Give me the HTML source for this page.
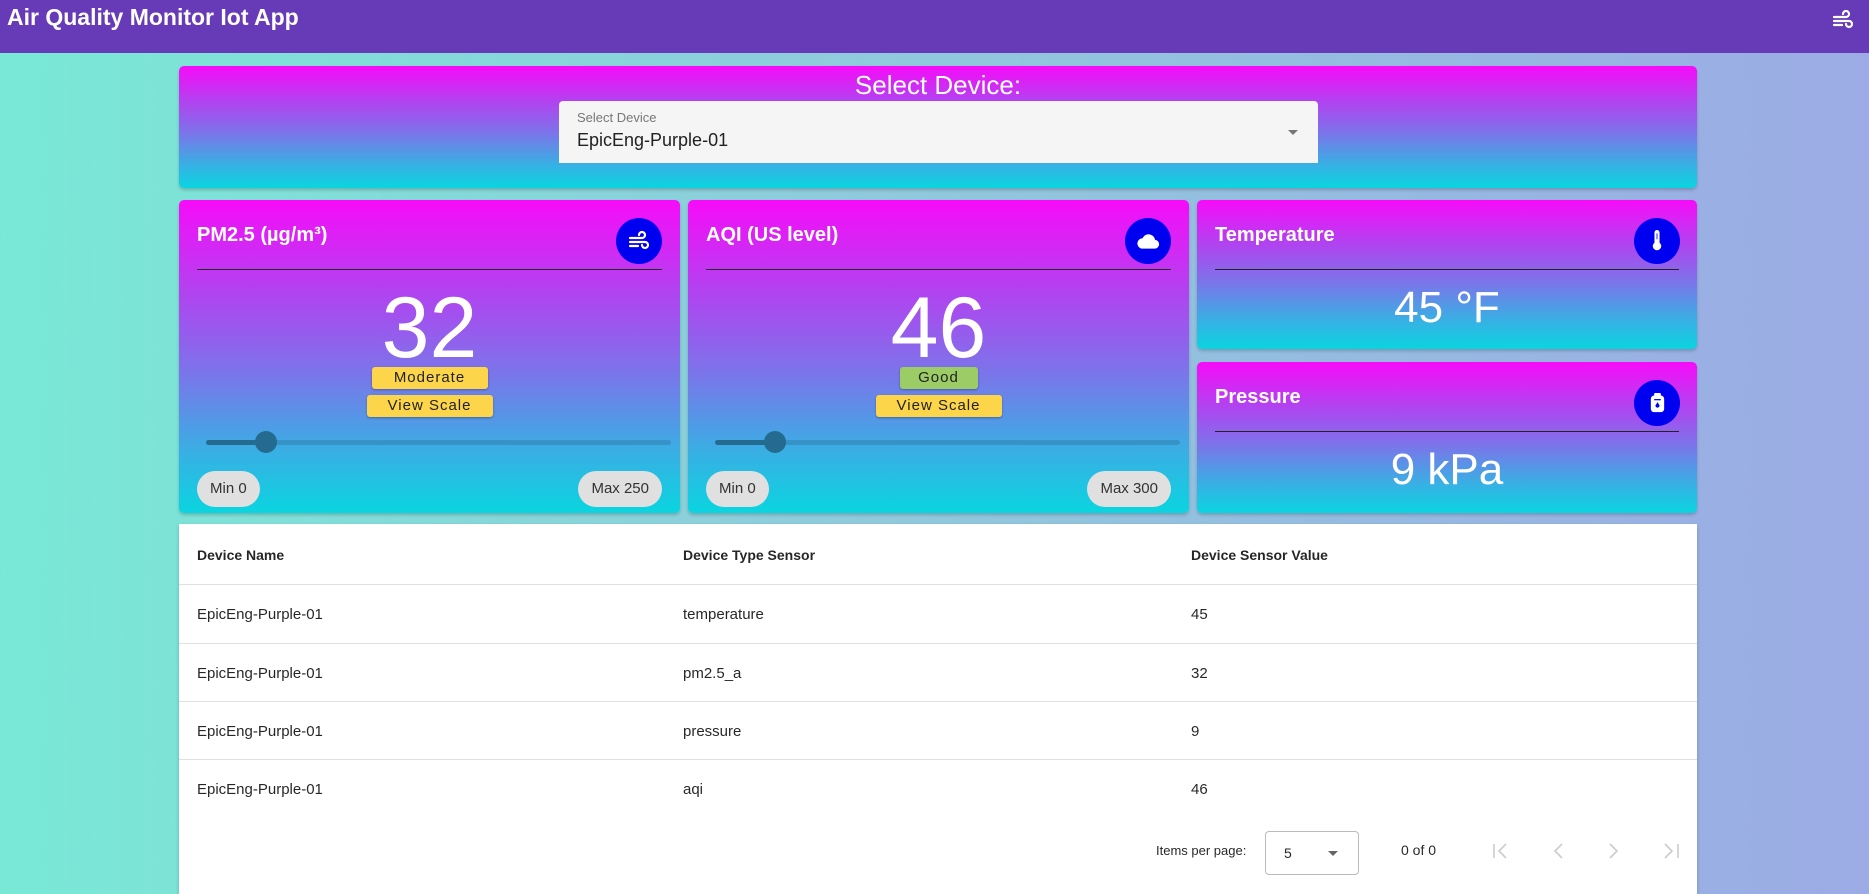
<!DOCTYPE html>
<html><head><meta charset="utf-8"><style>
*{box-sizing:border-box;margin:0;padding:0}
body{width:1869px;height:882px;overflow:hidden;font-family:"Liberation Sans",sans-serif;background:linear-gradient(90deg,#79e9d6 0%,#8fcbdc 45%,#9cabe5 100%);position:relative}
.bar{position:absolute;left:0;top:0;width:1869px;height:53px;background:#673ab7;color:#fff}
.bar .t{position:absolute;left:7px;top:4px;font-size:23px;font-weight:bold}
.card{position:absolute;border-radius:5px;background:linear-gradient(180deg,#f70bf9 0%,#b044f0 30%,#7c74ea 55%,#3aaee4 80%,#0ad5e0 100%);box-shadow:0 2px 3px rgba(0,0,0,.2);color:#fff}
.title{position:absolute;left:18px;top:24px;font-size:20px;font-weight:bold}
.ic{position:absolute;width:46px;height:46px;border-radius:50%;background:#0000f0;display:flex;align-items:center;justify-content:center}
.div{position:absolute;left:18px;right:18px;height:1px;background:#222}
.big{position:absolute;left:0;right:0;text-align:center;line-height:1}
.chip{position:absolute;left:50%;transform:translateX(-50%);background:#fcd54a;color:#222;font-size:15px;text-align:center;border-radius:3px;box-shadow:0 1px 2px rgba(0,0,0,.3);letter-spacing:1px;line-height:22px}
.track{position:absolute;height:5px;background:rgba(36,107,143,.35);border-radius:3px}
.thumb{position:absolute;width:22px;height:22px;border-radius:50%;background:#246b8f}
.pill{position:absolute;background:#e0e0e0;color:#333;font-size:15px;border-radius:18px;height:36px;line-height:36px;padding:0 13px}
.tbl{position:absolute;left:179px;top:524px;width:1518px;height:370px;background:#fff;box-shadow:0 2px 4px rgba(0,0,0,.2);font-size:15px;color:rgba(0,0,0,.85)}
.row{position:absolute;left:0;width:100%;border-bottom:1px solid #e0e0e0}
.row span{position:absolute}
</style></head><body>
<div class="bar"><div class="t">Air Quality Monitor Iot App</div>
<svg style="position:absolute;left:1830px;top:8px" width="26" height="24" viewBox="0 0 24 24" fill="none" stroke="#fff" stroke-width="2.2" stroke-linecap="round"><path d="M3 9h12a3 3 0 1 0-3-3M3 13h15a3 3 0 1 1-3 3M3 17h8"/></svg></div>

<div class="card" style="left:179px;top:66px;width:1518px;height:122px">
<div style="position:absolute;left:0;right:0;top:4px;text-align:center;font-size:26px">Select Device:</div>
<div style="position:absolute;left:380px;top:35px;width:759px;height:62px;background:#f5f5f5;border-radius:4px 4px 0 0;color:#222">
<div style="position:absolute;left:18px;top:9px;font-size:13px;color:#777">Select Device</div>
<div style="position:absolute;left:18px;top:29px;font-size:18px">EpicEng-Purple-01</div>
<div style="position:absolute;right:20px;top:29px;border-left:5px solid transparent;border-right:5px solid transparent;border-top:5px solid #777"></div></div></div>

<div class="card" style="left:179px;top:200px;width:501px;height:313px">
<div class="title">PM2.5 (µg/m³)</div>
<div class="ic" style="left:437px;top:18px"><svg width="26" height="24" viewBox="0 0 24 24" fill="none" stroke="#fff" stroke-width="2.2" stroke-linecap="round"><path d="M3 9h12a3 3 0 1 0-3-3M3 13h15a3 3 0 1 1-3 3M3 17h8"/></svg></div>
<div class="div" style="top:69px"></div>
<div class="big" style="top:85px;font-size:86px">32</div>
<div class="chip" style="top:167px;width:116px">Moderate</div>
<div class="chip" style="top:195px;width:126px;height:22px">View Scale</div>
<div class="track" style="left:27px;width:465px;top:240px"></div>
<div class="track" style="left:27px;width:60px;top:240px;background:#246b8f"></div>
<div class="thumb" style="left:76px;top:231px"></div>
<div class="pill" style="left:18px;top:271px">Min 0</div>
<div class="pill" style="right:18px;top:271px">Max 250</div></div>

<div class="card" style="left:688px;top:200px;width:501px;height:313px">
<div class="title">AQI (US level)</div>
<div class="ic" style="left:437px;top:18px"><svg width="26" height="22" viewBox="0 0 24 20"><path d="M6 17h12a4 4 0 0 0 .5-8A6 6 0 0 0 7 7.5 4.8 4.8 0 0 0 6 17z" fill="#fff"/></svg></div>
<div class="div" style="top:69px"></div>
<div class="big" style="top:85px;font-size:86px">46</div>
<div class="chip" style="top:167px;width:78px;background:#9ccc65">Good</div>
<div class="chip" style="top:195px;width:126px">View Scale</div>
<div class="track" style="left:27px;width:465px;top:240px"></div>
<div class="track" style="left:27px;width:60px;top:240px;background:#246b8f"></div>
<div class="thumb" style="left:76px;top:231px"></div>
<div class="pill" style="left:18px;top:271px">Min 0</div>
<div class="pill" style="right:18px;top:271px">Max 300</div></div>

<div class="card" style="left:1197px;top:200px;width:500px;height:149px">
<div class="title">Temperature</div>
<div class="ic" style="left:437px;top:18px"><svg width="12" height="22" viewBox="0 0 14 26"><path d="M4 3a3 3 0 0 1 6 0v12a5 5 0 1 1-6 0z" fill="#fff"/><path d="M7 4v7" stroke="#0000f0" stroke-width="1"/></svg></div>
<div class="div" style="top:69px"></div>
<div class="big" style="top:86px;font-size:44px">45 °F</div></div>

<div class="card" style="left:1197px;top:362px;width:500px;height:151px">
<div class="title">Pressure</div>
<div class="ic" style="left:437px;top:18px"><svg width="15" height="22" viewBox="0 0 18 26"><rect x="5" y="1" width="8" height="4" rx="1" fill="#fff"/><rect x="1" y="4" width="16" height="20" rx="4" fill="#fff"/><path d="M5 9h8" stroke="#0000f0" stroke-width="1.5"/><path d="M9 12l-2.5 4a2.5 2.5 0 1 0 5 0z" fill="#0000f0"/></svg></div>
<div class="div" style="top:69px"></div>
<div class="big" style="top:86px;font-size:44px">9 kPa</div></div>

<div class="tbl">
<div class="row" style="top:0;height:61px;font-weight:bold;font-size:14px"><span style="left:18px;top:23px">Device Name</span><span style="left:504px;top:23px">Device Type Sensor</span><span style="left:1012px;top:23px">Device Sensor Value</span></div>
<div class="row" style="top:61px;height:59px"><span style="left:18px;top:21px">EpicEng-Purple-01</span><span style="left:504px;top:21px">temperature</span><span style="left:1012px;top:21px">45</span></div>
<div class="row" style="top:120px;height:58px"><span style="left:18px;top:21px">EpicEng-Purple-01</span><span style="left:504px;top:21px">pm2.5_a</span><span style="left:1012px;top:21px">32</span></div>
<div class="row" style="top:178px;height:58px"><span style="left:18px;top:21px">EpicEng-Purple-01</span><span style="left:504px;top:21px">pressure</span><span style="left:1012px;top:21px">9</span></div>
<div class="row" style="top:236px;height:59px;border:none"><span style="left:18px;top:21px">EpicEng-Purple-01</span><span style="left:504px;top:21px">aqi</span><span style="left:1012px;top:21px">46</span></div>
<div style="position:absolute;left:977px;top:319px;font-size:13px">Items per page:</div>
<div style="position:absolute;left:1086px;top:307px;width:94px;height:44px;border:1px solid #bbb;border-radius:4px"><span style="position:absolute;left:18px;top:13px;font-size:14px">5</span><span style="position:absolute;right:20px;top:19px;border-left:5px solid transparent;border-right:5px solid transparent;border-top:5px solid #666"></span></div>
<div style="position:absolute;left:1222px;top:318px;font-size:14px">0 of 0</div>
<svg style="position:absolute;left:1310px;top:315px" width="200" height="24" viewBox="0 0 200 24" fill="none" stroke="#ccc" stroke-width="1.6"><path d="M5 5v14M17 5l-7 7 7 7M73 5l-7 7 7 7M121 5l7 7-7 7M176 5l7 7-7 7M189 5v14"/></svg>
</div>
</body></html>
